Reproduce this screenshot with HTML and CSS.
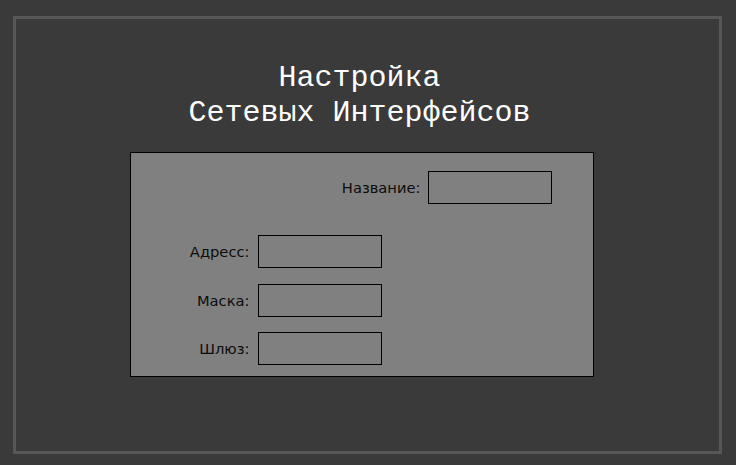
FILE: index.html
```html
<!DOCTYPE html>
<html lang="ru">
<head>
  <meta charset="UTF-8">
  <meta name="viewport" content="width=device-width, initial-scale=1.0">
  <title>Настройка Сетевых Интерфейсов</title>
  <link rel="stylesheet" href="styles.css">
</head>
<body>
  <div class="frame">
    <h1 class="title">Настройка<br>Сетевых Интерфейсов</h1>
    <div class="panel">
      <div class="name-row">
        <label for="name">Название:</label>
        <input type="text" id="name">
      </div>
      <div class="fields">
        <div class="field">
          <label for="address">Адресс:</label>
          <input type="text" id="address">
        </div>
        <div class="field mask">
          <label for="mask">Маска:</label>
          <input type="text" id="mask">
        </div>
        <div class="field">
          <label for="gateway">Шлюз:</label>
          <input type="text" id="gateway">
        </div>
      </div>
    </div>
  </div>
</body>
</html>
```

FILE: styles.css
```css
body {
  margin: 16px 14px 11px 13px;
  background: #3a3a3a;
  font-family: "DejaVu Sans", Verdana, sans-serif;
  height: 438px;
}
.frame {
  box-sizing: border-box;
  height: 100%;
  border: 3px solid #575757;
  display: flex;
  flex-direction: column;
  align-items: center;
  padding-right: 12px;
}
.title {
  margin: 42px 4px 0 0;
  font-family: "Liberation Mono", "Courier New", monospace;
  font-weight: normal;
  font-size: 30px;
  line-height: 35px;
  color: #fff;
  text-align: center;
}
.panel {
  box-sizing: border-box;
  width: 464px;
  height: 225px;
  margin-top: 21px;
  background: #808080;
  border: 1px solid #000;
  padding: 18px 41px 0 0;
}
label {
  font-size: 14.7px;
  color: #0c0c0c;
}
input {
  box-sizing: border-box;
  width: 124px;
  height: 33px;
  margin: 0;
  padding: 0 4px;
  background: #808080;
  border: 1px solid #000;
  outline: none;
}
.name-row {
  display: flex;
  justify-content: flex-end;
  align-items: center;
  gap: 7px;
}
.fields {
  display: flex;
  flex-direction: column;
  gap: 15px;
  margin-top: 31px;
}
.field {
  display: flex;
  align-items: center;
  gap: 8px;
}
.field.mask {
  margin-top: 1px;
}
.field label {
  width: 119px;
  text-align: right;
}
```
